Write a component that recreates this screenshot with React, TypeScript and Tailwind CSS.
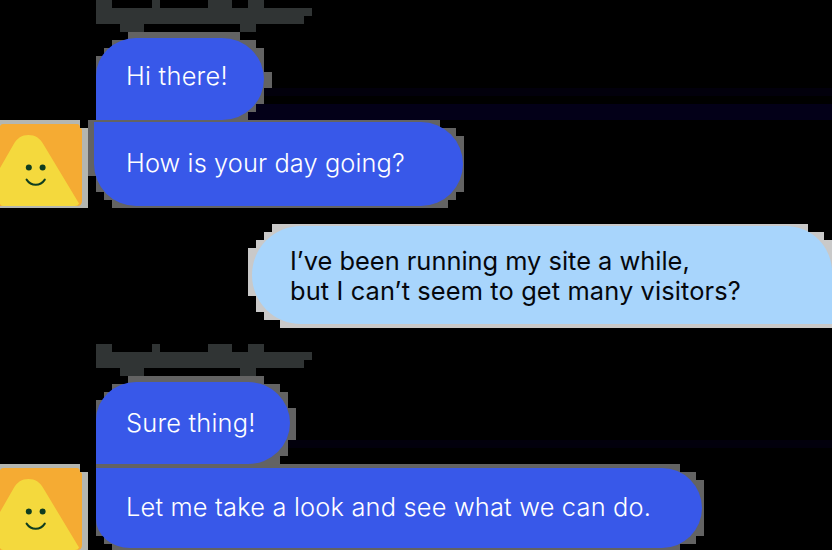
import type { ReactNode } from "react";

const NAME_HALO =
  "M0 0h16v8h40v-8h8v8h48v-8h24v8h16v-8h16v8h48v8h-8v8h-48v8h-16v-8h-96v8h-24v-8h-24z";

function Halo({ d, className }: { d: string; className: string }) {
  return (
    <svg
      aria-hidden="true"
      width="832"
      height="110"
      shapeRendering="crispEdges"
      className={`pointer-events-none absolute left-0 top-0 ${className}`}
    >
      <path d={d} fill="currentColor" />
    </svg>
  );
}

function NameMark() {
  return (
    <div className="ml-24 h-8 w-[216px] shrink-0">
      <svg width="216" height="32" shapeRendering="crispEdges" className="block">
        <path d={NAME_HALO} fill="#303434" />
      </svg>
    </div>
  );
}

function Avatar() {
  return (
    <svg width="88" height="88" viewBox="0 0 88 88" className="block shrink-0" aria-label="Avatar">
      <path d="M0 0h80v8h8v80H0z" fill="#b4b6b0" shapeRendering="crispEdges" />
      <path d="M0 6Q1 4 3 4H77q3 0 3 4 2 0 2 3v70q0 5-5 5H0z" fill="#f5ab33" />
      <path d="M0 48 13.5 24.5C17 18 22 15 28.5 15S40 18 43.5 24.5L79 83.5Q78 86 75 86H3Q1 86 0 84z" fill="#f4d93d" />
      <path d="M80 0h8v8h-8z" fill="#000" shapeRendering="crispEdges" />
      <circle cx="28.8" cy="47.4" r="3" fill="#0f3d20" />
      <circle cx="42.6" cy="47.4" r="3" fill="#0f3d20" />
      <path d="M26.6 59.6c4.6 7 13.6 7 18.2 0" fill="none" stroke="#0f3d20" strokeWidth="2" strokeLinecap="round" />
    </svg>
  );
}

function Row({ className, halo, haloClass, children }: { className: string; halo: string; haloClass: string; children: ReactNode }) {
  return (
    <div className={`relative flex w-full shrink-0 items-start ${className}`}>
      <Halo d={halo} className={haloClass} />
      {children}
    </div>
  );
}

export default function App() {
  return (
    <main
      className="flex h-[550px] w-[832px] flex-col overflow-hidden bg-black text-[25.4px] leading-[30px] text-white"
      style={{ fontFamily: 'Inter, "Liberation Sans", sans-serif' }}
    >
      <NameMark />
      <Row
        className="h-[88px] bg-[linear-gradient(to_bottom,#000_56px,#02000c_56px,#02000c_64px,#000_64px,#000_72px,#030018_72px)]"
        haloClass="text-[#636363]"
        halo="M128 0H240V8H256V16H264V40H272V56H264V72H256V80H248V88H96V24H104V16H112V8H128z"
      >
        <div className="h-full w-24 shrink-0 bg-black" />
        <div className="relative mt-1.5 flex h-[82px] w-[168px] items-center rounded-[40px_42px_42px_0/38px_41px_41px_0] bg-[#3858e9] pb-[7px] pl-[30px]">
          <span className="whitespace-nowrap font-[350] tracking-[0.25px]">Hi there!</span>
        </div>
      </Row>
      <Row
        className="h-[88px]"
        haloClass="text-[#636363]"
        halo="M88 0H440V8H456V16H464V72H456V80H448V88H112V80H104V72H96V56H88z"
      >
        <div className="relative">
          <Avatar />
        </div>
        <div className="relative ml-1.5 mt-0.5 flex h-[84px] w-[369px] items-center rounded-[0_42px_42px_42px] bg-[#3858e9] pb-0.5 pl-8">
          <span className="whitespace-nowrap font-[350] tracking-[0.1px]">How is your day going?</span>
        </div>
      </Row>
      <Row
        className="mt-4 h-[104px]"
        haloClass="text-[#c9c9c9]"
        halo="M272 0H808V8H824V16H832V104H280V96H264V88H256V72H248V24H256V16H264V8H272z"
      >
        <div className="relative ml-[252px] mt-0.5 flex h-[98px] w-[580px] items-center rounded-[49px_46px_0_49px] bg-[#a8d5fc] pt-px pl-[38px] text-[#05070c]">
          <p className="whitespace-nowrap font-[380]">
            I’ve been running my site a while,
            <br />
            <span className="tracking-[0.12px]">but I can’t seem to get many visitors?</span>
          </p>
        </div>
      </Row>
      <div className="mt-4">
        <NameMark />
      </div>
      <Row
        className="h-[88px] bg-[linear-gradient(to_bottom,#000_64px,#02000c_64px,#02000c_72px,#000_72px)]"
        haloClass="text-[#636363]"
        halo="M128 0H264V8H280V16H288V32H296V64H288V80H280V88H96V24H104V16H112V8H128z"
      >
        <div className="h-full w-24 shrink-0 bg-black" />
        <div className="relative mt-1.5 flex h-[82px] w-[194px] items-center rounded-[40px_42px_42px_0/38px_41px_41px_0] bg-[#3858e9] pl-[30px]">
          <span className="whitespace-nowrap font-[350] tracking-[0.2px]">Sure thing!</span>
        </div>
      </Row>
      <Row
        className="h-[86px]"
        haloClass="text-[#636363]"
        halo="M96 0H680V8H696V16H704V72H696V80H680V88H112V80H104V72H96z"
      >
        <div className="relative">
          <Avatar />
        </div>
        <div className="relative ml-2 mt-1 flex h-20 w-[606px] items-center rounded-[0_40px_40px_34px/0_40px_40px_29px] bg-[#3858e9] pb-0.5 pl-[30px]">
          <span className="whitespace-nowrap font-[350] tracking-[0.19px]">Let me take a look and see what we can do.</span>
        </div>
      </Row>
    </main>
  );
}
